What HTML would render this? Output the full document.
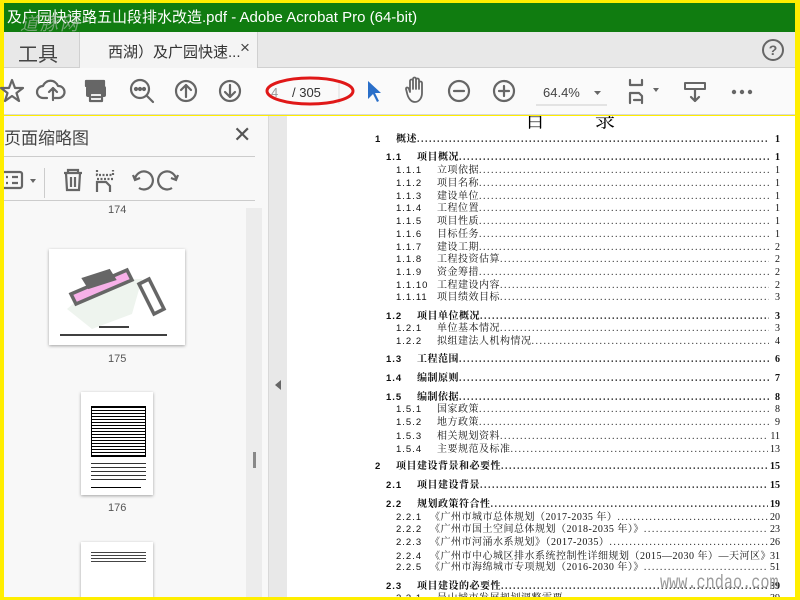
<!DOCTYPE html>
<html><head><meta charset="utf-8"><style>
*{margin:0;padding:0;box-sizing:border-box}
html,body{width:800px;height:600px;overflow:hidden}
body{background:#ffee00;position:relative;font-family:"Liberation Sans","Noto Sans CJK SC",sans-serif}
.a{position:absolute}
#title{left:4px;top:3px;width:791px;height:29px;background:#107c10;color:#fff;font-size:15px;line-height:29px;padding-left:3px;white-space:nowrap;overflow:hidden}
#tabs{left:4px;top:32px;width:791px;height:36px;background:#e8e8e8;border-bottom:1px solid #d0d0d0}
#tb{left:4px;top:68px;width:791px;height:47px;background:#fafafa;border-bottom:1px solid #d8d8d8}
#panel{left:4px;top:116px;width:264px;height:481px;background:#f8f8f8;overflow:hidden}
#gut{left:268px;top:116px;width:19px;height:481px;background:#e8e8e8;border-left:1px solid #d8d8d8}
#doc{left:287px;top:116px;width:508px;height:481px;background:#fff;overflow:hidden}
.r{position:absolute;left:0;width:508px;height:13px;font-family:"Liberation Serif","Noto Serif CJK SC",serif;font-size:10px;line-height:13px;color:#111;white-space:nowrap}
.r .n{position:absolute;font-family:"Liberation Sans",sans-serif;font-size:9.5px;letter-spacing:1px}
.r .t{position:absolute;display:flex;right:26px;letter-spacing:.5px}
.r .d{flex:1;overflow:hidden;letter-spacing:1.5px;color:#333}
.r .p{position:absolute;right:15px;background:#fff;padding-left:2px}
.b{font-weight:bold}
</style></head><body>
<div id="title" class="a">及广园快速路五山段排水改造.pdf - Adobe Acrobat Pro (64-bit)</div>
<div class="a" style="left:20px;top:10px;color:rgba(200,200,200,.55);font-size:18px;font-style:italic;letter-spacing:2px">道豚网</div>
<div id="tabs" class="a">
 <div class="a" style="left:14px;top:6px;font-size:20px;color:#444">工具</div>
 <div class="a" style="left:75px;top:0;width:179px;height:36px;background:#f4f4f4;border-left:1px solid #d0d0d0;border-right:1px solid #d0d0d0"></div>
 <div class="a" style="left:104px;top:9px;font-size:15px;color:#333">西湖）及广园快速...</div>
 <div class="a" style="left:236px;top:6px;font-size:17px;color:#444">×</div>
 <svg class="a" style="left:757px;top:6px" width="24" height="24"><circle cx="12" cy="12" r="10" fill="none" stroke="#666" stroke-width="2"/><text x="12" y="17" font-size="14" text-anchor="middle" fill="#666" font-family="Liberation Sans" font-weight="bold">?</text></svg>
</div>
<div id="tb" class="a"></div>
<svg class="a" style="left:0;top:76px" width="800" height="32">
 <g stroke="#666" fill="none" stroke-width="2.2" stroke-linecap="round" stroke-linejoin="round">
 <path d="M12 4l3 8h8l-6.5 5 2.5 8-7-5-7 5 2.5-8L1 12h8z"/>
 <path d="M47 22h-4a6 6 0 0 1 0-12 8 8 0 0 1 15 0 6 6 0 0 1 1 12h-4M53 24V12m-4 4l4-4 4 4"/>
 <rect x="86" y="5" width="18" height="5" fill="#666"/><rect x="86" y="10" width="20" height="11" rx="2" fill="#666" stroke="none"/><rect x="90" y="17" width="12" height="8" fill="#fff"/><path d="M92 21h8"/>
 <circle cx="140" cy="13" r="9"/><path d="M147 20l6 6"/><circle cx="136" cy="13" r="1" fill="#666"/><circle cx="140" cy="13" r="1" fill="#666"/><circle cx="144" cy="13" r="1" fill="#666"/>
 <circle cx="186" cy="15" r="10"/><path d="M186 21V9m-5 5l5-5 5 5"/>
 <circle cx="230" cy="15" r="10"/><path d="M230 9v12m-5-5l5 5 5-5"/>
 <circle cx="459" cy="15" r="10"/><path d="M454 15h10"/>
 <circle cx="504" cy="15" r="10"/><path d="M499 15h10M504 10v10"/>
 <path d="M415 26c-4 0-7-4-8-9l-1-4c0-2 2-2 3 0l1 3V5c0-2 3-2 3 0v8V3c0-2 3-2 3 0v10V4c0-2 3-2 3 0v9V7c0-2 3-2 3 0v10c0 5-3 9-7 9z" stroke-width="1.8"/>
 <path d="M630 4v5h12V4M630 27v-10h9l3 3v7M634 24h6" />
 <rect x="685" y="7" width="20" height="6" stroke-width="2"/><path d="M695 14v11m-4-4l4 4 4-4"/>
 </g>
 <path d="M653 12h6l-3 4z M594 15h7l-3.5 4z" fill="#666"/>
 <path d="M368 5l0 18 5-5 4 8 2-1-4-8 6 0z" fill="#2a6fc9"/>
 <circle cx="734" cy="16" r="2.2" fill="#666"/><circle cx="742" cy="16" r="2.2" fill="#666"/><circle cx="750" cy="16" r="2.2" fill="#666"/>
 <text x="271" y="21" font-size="13" fill="#999" font-family="Liberation Sans">4</text>
 <text x="292" y="21" font-size="13" fill="#333" font-family="Liberation Sans">/ 305</text>
 <line x1="339" y1="4" x2="339" y2="28" stroke="#ddd"/>
 <text x="543" y="21" font-size="13" fill="#444" font-family="Liberation Sans">64.4%</text>
 <line x1="536" y1="29" x2="607" y2="29" stroke="#ccc"/>
 <ellipse cx="310" cy="15" rx="43" ry="13" fill="none" stroke="#e01818" stroke-width="3"/>
</svg>
<div id="panel" class="a">
 <div class="a" style="left:0;top:8px;font-size:17px;color:#444">页面缩略图</div>
 <div class="a" style="left:229px;top:6px;font-size:22px;color:#555">✕</div>
 <div class="a" style="left:0;top:40px;width:251px;height:1px;background:#ccc"></div>
 <div class="a" style="left:0;top:84px;width:251px;height:1px;background:#ccc"></div>
 <div class="a" style="left:40px;top:52px;width:1px;height:30px;background:#ccc"></div>
 <svg class="a" style="left:0;top:50px" width="200" height="32"><g stroke="#666" fill="none" stroke-width="2.2">
 <rect x="-2" y="6" width="20" height="16" rx="2"/><path d="M2 11h2M2 17h2M8 11h6M8 17h6"/>
 <path d="M60 7h18M64 7V4h10v3M62 7l1 17h12l1-17M67 11v10M71 11v10"/>
 <path d="M93 4v5h16V4M93 13h16" stroke-dasharray="2 1.5"/><path d="M93 26v-10h9l4 4v6"/>
 <path d="M135 22a9 9 0 1 0-4-9M129 9l2 5 5-2" /><path d="M168 22a9 9 0 1 1 4-9M174 9l-2 5-5-2"/>
 </g><path d="M26 13h6l-3 4z" fill="#666"/></svg>
 <div class="a" style="left:242px;top:92px;width:16px;height:389px;background:#ececec"></div>
 <div class="a" style="left:249px;top:336px;width:3px;height:16px;background:#888"></div>
 <div class="a" style="left:104px;top:88px;font-size:11px;color:#555">174</div>
 <div class="a" style="left:45px;top:133px;width:136px;height:96px;background:#fff;box-shadow:0 1px 3px rgba(0,0,0,.35)">
  <svg width="136" height="96"><path d="M18 60l35-30 40 0-10 35-40 15z" fill="#eef4ee"/><g stroke="#666" stroke-width="3.5" fill="#f7b0e8">
  <path d="M22 45l56-24 5 10-56 24z"/><path d="M35 30l25-8 5 8-25 8z" fill="#666"/><path d="M90 35l10-5 15 30-10 5z" fill="#fff"/>
  </g><line x1="11" y1="86" x2="118" y2="86" stroke="#000" stroke-width="1.5"/><line x1="50" y1="78" x2="80" y2="78" stroke="#000" stroke-width="1.5"/></svg>
 </div>
 <div class="a" style="left:104px;top:237px;font-size:11px;color:#555">175</div>
 <div class="a" style="left:77px;top:276px;width:72px;height:103px;background:#fff;box-shadow:0 1px 3px rgba(0,0,0,.35)"></div>
 <div class="a" style="left:87px;top:290px;width:55px;height:51px;border:1px solid #000;background:repeating-linear-gradient(#000 0 1px,#fff 1px 3px)"></div>
 <div class="a" style="left:87px;top:347px;width:55px;height:20px;background:repeating-linear-gradient(#333 0 1px,#fff 1px 4px)"></div>
 <div class="a" style="left:87px;top:371px;width:50px;height:1px;background:#000"></div>
 <div class="a" style="left:104px;top:386px;font-size:11px;color:#555">176</div>
 <div class="a" style="left:77px;top:426px;width:72px;height:60px;background:#fff;box-shadow:0 1px 3px rgba(0,0,0,.35)"></div>
 <div class="a" style="left:87px;top:436px;width:55px;height:12px;background:repeating-linear-gradient(#444 0 1px,#fff 1px 3px)"></div>
</div>
<div id="gut" class="a"><div class="a" style="left:6px;top:264px;width:0;height:0;border-top:5px solid transparent;border-bottom:5px solid transparent;border-right:6px solid #666"></div></div>
<div id="doc" class="a">
 <div class="a" style="left:238px;top:-12px;font-size:20px;font-family:'Noto Serif CJK SC',serif;letter-spacing:50px">目录</div>
 <div id="toc"></div>
</div>
<div class="a" style="left:660px;top:572px;font-size:19px;color:#9a9a9a;font-family:'Liberation Mono',monospace;transform:scaleX(.8);transform-origin:left">www.cndao.com</div>
<script>
var L=[[139,1,'1','概述','1'],[157,2,'1.1','项目概况','1'],[170,3,'1.1.1','立项依据','1'],[183,3,'1.1.2','项目名称','1'],[196,3,'1.1.3','建设单位','1'],[208,3,'1.1.4','工程位置','1'],[221,3,'1.1.5','项目性质','1'],[234,3,'1.1.6','目标任务','1'],[247,3,'1.1.7','建设工期','2'],[259,3,'1.1.8','工程投资估算','2'],[272,3,'1.1.9','资金筹措','2'],[285,3,'1.1.10','工程建设内容','2'],[297,3,'1.1.11','项目绩效目标','3'],
[316,2,'1.2','项目单位概况','3'],[328,3,'1.2.1','单位基本情况','3'],[341,3,'1.2.2','拟组建法人机构情况','4'],[359,2,'1.3','工程范围','6'],[378,2,'1.4','编制原则','7'],[397,2,'1.5','编制依据','8'],[409,3,'1.5.1','国家政策','8'],[422,3,'1.5.2','地方政策','9'],[436,3,'1.5.3','相关规划资料','11'],[449,3,'1.5.4','主要规范及标准','13'],
[466,1,'2','项目建设背景和必要性','15'],[485,2,'2.1','项目建设背景','15'],[504,2,'2.2','规划政策符合性','19'],[517,4,'2.2.1','《广州市城市总体规划（2017-2035 年）','20'],[529,4,'2.2.2','《广州市国土空间总体规划（2018-2035 年）》','23'],[542,4,'2.2.3','《广州市河涌水系规划》（2017-2035）','26'],[556,4,'2.2.4','《广州市中心城区排水系统控制性详细规划（2015—2030 年）—天河区》','31'],[567,4,'2.2.5','《广州市海绵城市专项规划（2016-2030 年）》','51'],[586,2,'2.3','项目建设的必要性','39'],[598,3,'2.3.1','吴山城市发展规划调整需要','39']];
var h='',dots='.'.repeat(200);
L.forEach(function(a){var y=a[0]-116-6,lv=a[1];var nx=lv==1?88:lv==2?99:109;var tx=lv==1?109:lv==2?130:lv==3?150:143;if(lv==4)lv=3;var b=lv<3?' b':'';
h+='<div class="r'+b+'" style="top:'+y+'px"><span class="n" style="left:'+nx+'px">'+a[2]+'</span><span class="t" style="left:'+tx+'px"><span>'+a[3]+'</span><span class="d">'+dots+'</span></span><span class="p">'+a[4]+'</span></div>';});
document.getElementById('toc').innerHTML=h;
</script>
</body></html>
